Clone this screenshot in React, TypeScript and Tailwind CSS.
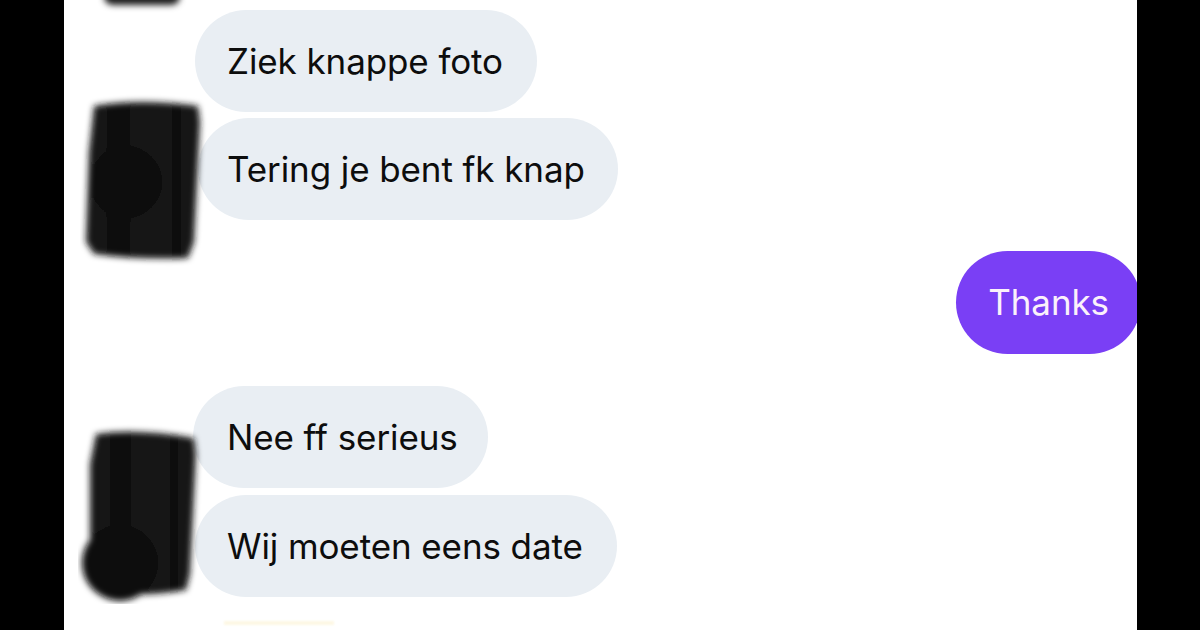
import type { ReactNode } from 'react'

const font = { fontFamily: 'Inter, "Liberation Sans", sans-serif' }

function Bubble({ children, width }: { children: ReactNode; width: string }) {
  return (
    <div
      className={`flex h-[102px] items-center rounded-full bg-[#e9eef3] text-[35px] tracking-[-0.1px] text-[#0d0d0d] [font-variant-ligatures:none] ${width}`}
    >
      {children}
    </div>
  )
}

// zwarte kras over de profielfoto
function Scribble({ variant }: { variant: 1 | 2 }) {
  const id = `blur${variant}`
  return (
    <svg width="130" height="180" viewBox="0 0 130 180" className="block">
      <defs>
        <filter id={id} x="-20%" y="-20%" width="140%" height="140%">
          <feGaussianBlur stdDeviation="3.2" />
        </filter>
        <linearGradient id={`g${variant}`} x1="0" x2="1" y1="0" y2="0">
          <stop offset="0" stopColor="#171717" />
          <stop offset="0.3" stopColor="#0e0e0e" />
          <stop offset="0.55" stopColor="#181818" />
          <stop offset="0.8" stopColor="#101010" />
          <stop offset="1" stopColor="#1a1a1a" />
        </linearGradient>
      </defs>
      {variant === 1 ? (
        <g filter={`url(#${id})`}>
          <path
            d="M14 14 Q60 6 118 14 L120 30 L114 150 L108 166 Q60 168 14 162 L6 150 L9 60 Z"
            fill={`url(#g${variant})`}
          />
          <circle cx="46" cy="90" r="36" fill="#080808" />
        </g>
      ) : (
        <g filter={`url(#${id})`}>
          <path
            d="M18 10 Q60 4 116 14 L118 30 L112 150 L108 166 Q70 172 40 170 L12 150 L12 40 Z"
            fill={`url(#g${variant})`}
          />
          <circle cx="42" cy="139" r="38" fill="#080808" />
        </g>
      )}
    </svg>
  )
}

export default function App() {
  return (
    <div className="flex h-[630px] w-[1200px] overflow-hidden bg-black" style={font}>
      <div className="w-[64px] shrink-0 bg-black" />

      <div className="relative flex flex-1 flex-col overflow-hidden bg-white">
        {/* rest van vorige avatar */}
        <div className="absolute left-[40px] top-[-12px] h-[17px] w-[76px] rounded-full bg-[#1c1c1c] blur-[3px]" />

        {/* groep 1 */}
        <div className="relative mt-[10px] flex flex-col gap-[6px] pl-[131px]">
          <Bubble width="w-[342px] pl-[32px]">Ziek knappe foto</Bubble>
          <Bubble width="w-[420px] ml-[3px] pl-[29px]">Tering je bent fk knap</Bubble>
          <div className="absolute left-[16px] top-[82px]">
            <Scribble variant={1} />
          </div>
        </div>

        {/* eigen bericht */}
        <div className="mt-[31px] flex justify-end">
          <div className="-mr-[4px] flex h-[103px] items-center rounded-full bg-[#7a3ff5] px-[32px] text-[35px] tracking-[-0.1px] text-[#fbf1fb]">
            Thanks
          </div>
        </div>

        {/* groep 2 */}
        <div className="relative mt-[32px] flex flex-col gap-[7px] pl-[129px]">
          <Bubble width="w-[295px] pl-[34px]">Nee ff serieus</Bubble>
          <Bubble width="w-[422px] ml-[2px] pl-[32px]">Wij moeten eens date</Bubble>
          <div className="absolute left-[14px] top-[38px]">
            <Scribble variant={2} />
          </div>
        </div>

        <div className="ml-[160px] mt-[24px] h-[4px] w-[110px] bg-[#fdf8e4] blur-[1px]" />
      </div>

      <div className="w-[63px] shrink-0 bg-black" />
    </div>
  )
}
